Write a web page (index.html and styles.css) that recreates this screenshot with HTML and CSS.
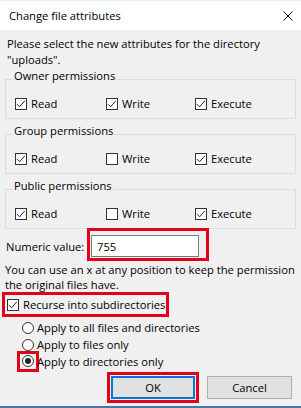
FILE: index.html
```html
<!DOCTYPE html>
<html>
<head>
    <title>Change file attributes</title>
    <meta charset="utf-8">
    <link rel="stylesheet" href="styles.css">
</head>
<body>
    <div class="dialog">
        <header class="titlebar">
            <h1>Change file attributes</h1>
            <svg class="close" width="10" height="10" viewBox="0 0 10 10">
                <path d="M0.5 0.5 L9.5 9.5 M9.5 0.5 L0.5 9.5" stroke="#000" stroke-width="1" fill="none"/>
            </svg>
        </header>

        <main class="content">
            <p class="intro">Please select the new attributes for the directory<br>"uploads".</p>

            <fieldset class="group">
                <legend>Owner permissions</legend>
                <div class="perms">
                    <label class="check"><span class="box"><svg viewBox="0 0 12 12"><path d="M2 6.2 L4.6 8.8 L9.8 2.8" /></svg></span>Read</label>
                    <label class="check"><span class="box"><svg viewBox="0 0 12 12"><path d="M2 6.2 L4.6 8.8 L9.8 2.8" /></svg></span>Write</label>
                    <label class="check"><span class="box"><svg viewBox="0 0 12 12"><path d="M2 6.2 L4.6 8.8 L9.8 2.8" /></svg></span>Execute</label>
                </div>
            </fieldset>

            <fieldset class="group">
                <legend>Group permissions</legend>
                <div class="perms">
                    <label class="check"><span class="box"><svg viewBox="0 0 12 12"><path d="M2 6.2 L4.6 8.8 L9.8 2.8" /></svg></span>Read</label>
                    <label class="check"><span class="box"></span>Write</label>
                    <label class="check"><span class="box"><svg viewBox="0 0 12 12"><path d="M2 6.2 L4.6 8.8 L9.8 2.8" /></svg></span>Execute</label>
                </div>
            </fieldset>

            <fieldset class="group">
                <legend>Public permissions</legend>
                <div class="perms">
                    <label class="check"><span class="box"><svg viewBox="0 0 12 12"><path d="M2 6.2 L4.6 8.8 L9.8 2.8" /></svg></span>Read</label>
                    <label class="check"><span class="box"></span>Write</label>
                    <label class="check"><span class="box"><svg viewBox="0 0 12 12"><path d="M2 6.2 L4.6 8.8 L9.8 2.8" /></svg></span>Execute</label>
                </div>
            </fieldset>

            <div class="numeric">
                <label class="numeric-label" for="numeric">Numeric value:</label>
                <span class="mark mark-input"><input id="numeric" type="text" value="755"></span>
            </div>

            <p class="hint">You can use an x at any position to keep the permission<br>the original files have.</p>

            <label class="check recurse"><span class="box"><svg viewBox="0 0 12 12"><path d="M2 6.2 L4.6 8.8 L9.8 2.8" /></svg></span>Recurse into subdirectories</label>

            <div class="radios">
                <label class="radio"><span class="circle"></span>Apply to all files and directories</label>
                <label class="radio"><span class="circle"></span>Apply to files only</label>
                <label class="radio"><span class="mark mark-radio"><span class="circle on"></span></span>Apply to directories only</label>
            </div>

            <div class="buttons">
                <span class="mark mark-ok"><button class="btn default">OK</button></span>
                <button class="btn">Cancel</button>
            </div>
        </main>
    </div>
</body>
</html>
```

FILE: styles.css
```css
body {
    margin: 0;
    font-family: "Open Sans", "Liberation Sans", sans-serif;
    font-size: 11.2px;
    color: #000;
}

.dialog {
    width: 301px;
    height: 408px;
    box-sizing: border-box;
    background-color: #f0f0f0;
    border-bottom: 2px solid #4b76a3;
    display: flex;
    flex-direction: column;
    overflow: hidden;
}

.titlebar {
    height: 30px;
    flex: none;
    box-sizing: border-box;
    border-top: 1px solid #e3f4fb;
    background-color: #fff;
    display: flex;
    align-items: center;
    justify-content: space-between;
    padding: 0 8px 0 9px;
}

.titlebar h1 {
    margin: 0;
    font-size: 11.2px;
    font-weight: normal;
    line-height: 29px;
}

.close {
    display: block;
}

.content {
    padding: 6px 5px 0 5px;
}

.intro {
    margin: 0 0 1px 2px;
    line-height: 16px;
    white-space: nowrap;
}

/* group boxes */
.group {
    margin: 0;
    padding: 7px 0 6px 9px;
    border: 1px solid #dcdcdc;
    min-width: 0;
}

.group + .group {
    margin-top: 5px;
}

.group legend {
    margin-left: -2px;
    padding: 0 1px 6px 1px;
    line-height: 14px;
}

.perms {
    display: grid;
    grid-template-columns: 91px 89px auto;
    line-height: 16px;
}

.check {
    display: flex;
    align-items: center;
}

.box {
    width: 12px;
    height: 12px;
    box-sizing: border-box;
    border: 1px solid #333;
    background-color: #fff;
    margin-right: 4px;
    flex: none;
}

.box svg {
    display: block;
    width: 12px;
    height: 12px;
    margin: -1px;
}

.box path {
    fill: none;
    stroke: #222;
    stroke-width: 1;
}

/* red highlight frames */
.mark {
    border: 3px solid #e3001b;
}

.numeric {
    display: flex;
    align-items: baseline;
}

.numeric-label {
    width: 82px;
    padding-left: 1px;
    box-sizing: border-box;
    white-space: nowrap;
}

.mark-input {
    display: flex;
    padding: 4px 7px 1px 1px;
    margin-top: -1px;
}

.mark-input input {
    width: 108px;
    height: 22px;
    box-sizing: border-box;
    border: 1px solid #7a7a7a;
    padding: 0 5px;
    margin: 0;
    font: inherit;
    color: #000;
    background-color: #fff;
    outline: none;
}

.hint {
    margin: 1px 0 0 0;
    line-height: 15px;
    white-space: nowrap;
}

.recurse {
    width: fit-content;
    line-height: 19px;
    margin-left: -3px;
    padding: 0 1px 0 2px;
    border: 3px solid #e3001b;
}

.radios {
    margin-top: 2px;
    padding-left: 17px;
}

.radio {
    display: flex;
    align-items: center;
    line-height: 17px;
}

.circle {
    width: 12px;
    height: 12px;
    box-sizing: border-box;
    border: 1px solid #333;
    border-radius: 50%;
    background-color: #fff;
    margin-right: 3px;
    flex: none;
    display: flex;
    align-items: center;
    justify-content: center;
}

.circle.on::after {
    content: "";
    width: 6px;
    height: 6px;
    border-radius: 50%;
    background-color: #222;
}

.mark-radio {
    display: flex;
    padding: 1px 2px 2px 2px;
    margin: -2px -2px -2px -5px;
}

.mark-radio .circle {
    margin: 0;
}

.buttons {
    margin-top: 2px;
    padding-right: 4px;
    display: flex;
    justify-content: flex-end;
    align-items: center;
    gap: 8px;
}

.mark-ok {
    display: flex;
    padding: 1px;
}

.btn {
    width: 85px;
    height: 23px;
    box-sizing: border-box;
    margin: 0;
    padding: 0;
    border: 1px solid #adadad;
    background-color: #e1e1e1;
    font: inherit;
    color: #000;
}

.btn.default {
    width: 84px;
    border: 2px solid #0078d7;
}
```
